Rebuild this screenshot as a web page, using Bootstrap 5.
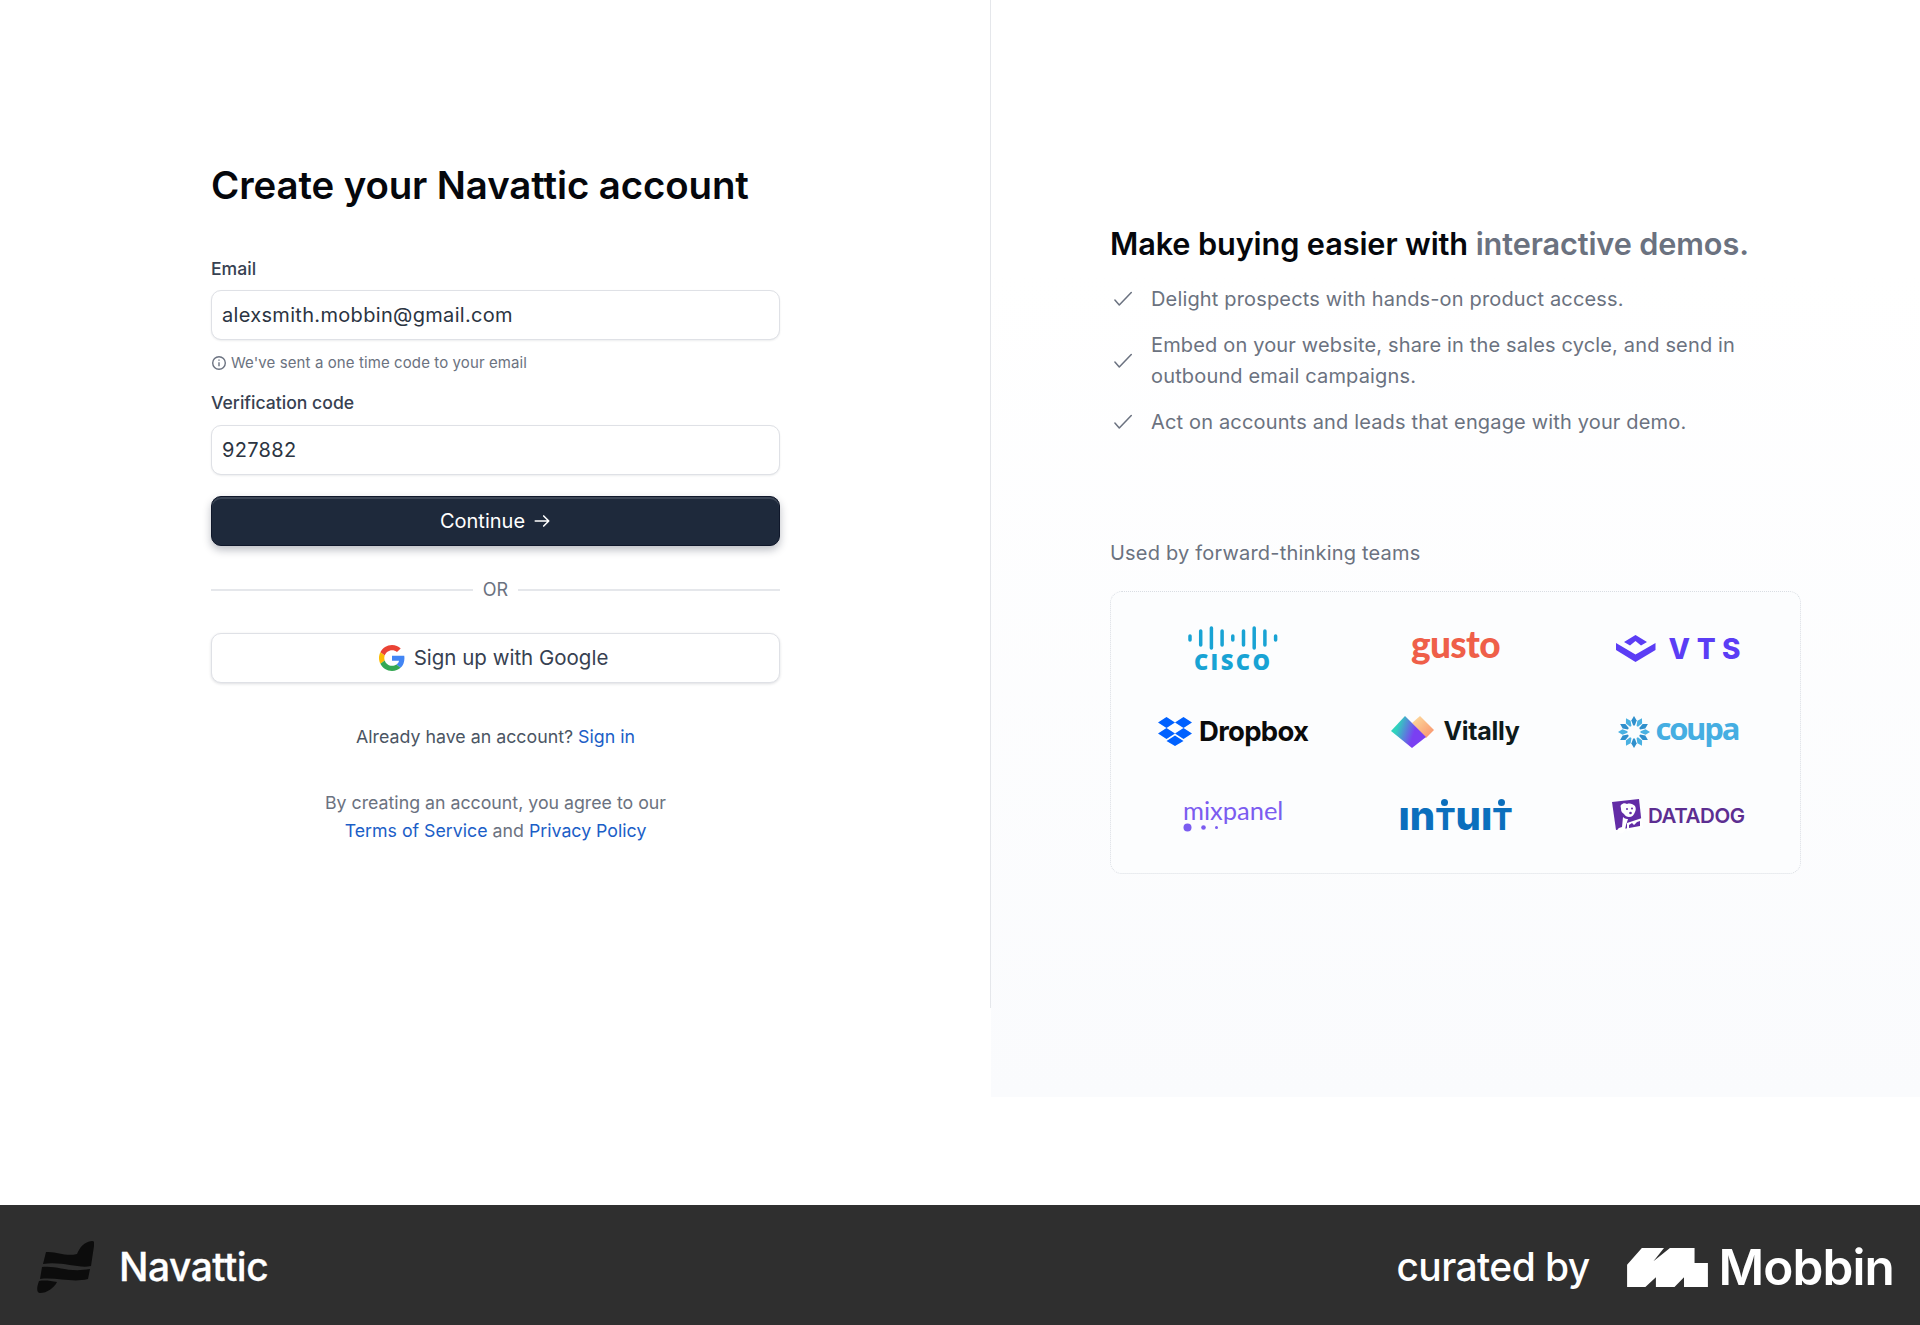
<!DOCTYPE html>
<html lang="en">
<head>
<meta charset="utf-8">
<title>Create your Navattic account</title>
<link href="https://cdn.jsdelivr.net/npm/bootstrap@5.3.0/dist/css/bootstrap.min.css" rel="stylesheet">
<style>
html,body{height:100%}
body{font-family:Inter,"Liberation Sans",sans-serif;color:#374151;background:#fff;overflow:hidden}
.page-wrap{height:1325px}
.main-area{height:1205px}
.left-side{width:991px;height:1008px;border-right:1px solid #e5e7eb;padding:163px 0 0 211px}
.form-box{width:569px}
.page-title{font-size:38.4px;line-height:44px;font-weight:600;color:#05070c;margin:0 0 48px;letter-spacing:-.1px;white-space:nowrap}
.fld-label{font-size:17.6px;line-height:27px;font-weight:500;color:#374151;margin:0 0 8px;display:block}
.fld-input.form-control{height:50px;font-size:20px;color:#2b3442;padding:0 10px;letter-spacing:.32px;border:1px solid #dfe1e6;border-radius:10px;box-shadow:0 1px 2px rgba(16,24,40,.08)}
#vc{margin-top:9px}
.hint-row{font-size:15px;line-height:22px;color:#6b7280;margin:12px 0 15px;letter-spacing:.1px}
.btn-dark-main.btn{height:50px;width:100%;margin-top:21px;background:#1e293b;color:#fff;font-size:20px;font-weight:400;border:1px solid #0f172a;border-radius:10px;box-shadow:inset 0 2px 0 #3c4656,0 4px 8px rgba(15,23,42,.28);padding:0}
.or-row{font-size:18px;color:#6b7280;line-height:27px;margin:30px 0 30px;gap:6px}
.or-line{flex:1;height:2px;background:#e5e7eb}
.btn-google.btn{height:50px;width:100%;background:#fff;color:#374151;font-size:20.5px;font-weight:400;border:1px solid #dfe1e6;border-radius:10px;box-shadow:0 1px 3px rgba(16,24,40,.14);padding:0 4px 0 0;gap:9px}
.foot-note{font-size:17.8px;line-height:27px;text-align:center;margin:40px 0 0;color:#4b5563}
.legal-note{font-size:17.75px;line-height:28px;text-align:center;margin:39px 0 0;color:#6b7280}
.blue-link{color:#1b5ec7;text-decoration:none}
.right-side{flex:1;height:1097px;background:linear-gradient(#fff 0,#fff 25%,#fafbfd 100%);padding:225px 119px 0 119px}
.pitch-title{font-size:30.7px;line-height:38px;font-weight:600;color:#05070c;margin:0 0 21px;white-space:nowrap;letter-spacing:-.12px}
.pitch-title span{color:#6b7280}
.pitch-list{list-style:none;margin:0;padding:0;font-size:20px;line-height:30.5px;color:#6b7280;letter-spacing:.16px}
.pitch-list li{display:flex;align-items:center;gap:17px;margin-bottom:15.5px;max-width:650px}
.pitch-list svg{flex:none;width:24px;height:24px}
.used-by{font-size:20px;line-height:30px;color:#6b7280;margin:101px 0 23px;letter-spacing:.2px}
.logo-card{width:691px;height:283px;padding:15px 11px;border:1px dotted #d9dde3;border-radius:12px;background:#fcfdfe}
.logo-cell{height:83px;display:flex;align-items:center;justify-content:center}
.logo-txt{white-space:nowrap;line-height:1}
.cisco-mark{display:flex;flex-direction:column;align-items:center}
.cisco-txt{font-family:"Open Sans",sans-serif;font-weight:800;font-size:22px;letter-spacing:2.4px;color:#18a3d4;margin-top:2px;line-height:19px}
.gusto-txt{font-family:Lato,sans-serif;font-weight:900;font-size:37px;color:#ef5f49;letter-spacing:-.6px;margin-top:-11px}
.vts-txt{font-weight:800;font-size:28px;color:#5b3df5;letter-spacing:6.5px;margin-left:13px;margin-right:-7px}
.drop-txt{font-weight:700;font-size:27.5px;color:#0b0b0b;letter-spacing:-.7px;margin-left:7px}
.vital-txt{font-weight:700;font-size:25px;color:#0e1a1a;letter-spacing:-.3px;margin-left:9px}
.coupa-txt{font-family:"Open Sans",sans-serif;font-weight:700;font-size:31px;color:#45aee2;letter-spacing:-2.2px;margin-left:4px;margin-top:-7px}
.mix-txt{font-family:Lato,sans-serif;font-weight:400;font-size:25.5px;color:#7b5cf0;line-height:24px}
.mix-dots{display:block;margin-top:1px}
.intuit-txt{font-weight:800;font-size:40px;color:#0b6fbd;letter-spacing:0;margin-top:2px}
.intuit-txt b{font-weight:800;font-size:30px;position:relative;display:inline-block}
.intuit-txt b::after{content:"";position:absolute;left:50%;top:-5px;width:7px;height:7px;margin-left:-4px;border-radius:50%;background:#0b6fbd}
.dog-cell{padding-top:4px}
.dog-txt{font-weight:600;font-size:20.5px;color:#5c2e91;letter-spacing:-.4px;margin-left:5px}
.bottom-bar{height:120px;background:#2f2f2f;padding:4px 26px 0 37px}
.nav-name{font-size:39px;font-weight:500;color:#fff;letter-spacing:-.5px;margin-left:25px;-webkit-text-stroke:.3px #fff}
.curated{font-size:39px;font-weight:500;color:#fff;letter-spacing:-.6px;margin-right:37px}
.mob-name{font-size:49.5px;font-weight:600;color:#fff;letter-spacing:-.9px;margin-left:11px}
</style>
</head>
<body>
<div class="page-wrap d-flex flex-column">
  <div class="main-area d-flex align-items-start">
    <div class="left-side">
      <div class="form-box">
        <h1 class="page-title">Create your Navattic account</h1>
        <form>
          <label class="fld-label" for="em">Email</label>
          <input class="form-control fld-input" id="em" type="text" value="alexsmith.mobbin@gmail.com">
          <div class="hint-row d-flex align-items-center gap-1">
            <svg width="16" height="16" viewBox="0 0 16 16" fill="none" stroke="#6b7280" stroke-width="1.4"><circle cx="8" cy="8" r="6.3"/><path d="M8 7.300v4M8 4.600v1.200"/></svg>
            <span>We've sent a one time code to your email</span>
          </div>
          <label class="fld-label mb-0" for="vc">Verification code</label>
          <input class="form-control fld-input" id="vc" type="text" value="927882">
          <button type="button" class="btn btn-dark-main d-flex align-items-center justify-content-center gap-2">Continue
            <svg width="18" height="18" viewBox="0 0 16 16" fill="none" stroke="#fff" stroke-width="1.4" stroke-linecap="round" stroke-linejoin="round"><path d="M2 8h12M9.500 3.500 14 8l-4.500 4.500"/></svg>
          </button>
          <div class="or-row d-flex align-items-center"><span class="or-line"></span><span class="px-1">OR</span><span class="or-line"></span></div>
          <button type="button" class="btn btn-google d-flex align-items-center justify-content-center">
            <svg width="26" height="26" viewBox="0 0 48 48"><path fill="#EA4335" d="M24 9.500c3.540 0 6.710 1.220 9.210 3.600l6.850-6.850C35.900 2.380 30.470 0 24 0 14.620 0 6.510 5.380 2.560 13.220l7.980 6.190C12.430 13.720 17.740 9.500 24 9.500z"/><path fill="#4285F4" d="M46.980 24.550c0-1.570-.15-3.090-.38-4.550H24v9.020h12.940c-.58 2.960-2.260 5.480-4.780 7.180l7.730 6c4.510-4.180 7.090-10.360 7.090-17.650z"/><path fill="#FBBC05" d="M10.530 28.590c-.48-1.450-.76-2.990-.76-4.590s.27-3.140.76-4.590l-7.980-6.190C.92 16.460 0 20.120 0 24c0 3.880.92 7.540 2.560 10.780l7.970-6.190z"/><path fill="#34A853" d="M24 48c6.480 0 11.930-2.130 15.890-5.810l-7.730-6c-2.150 1.450-4.920 2.300-8.160 2.300-6.260 0-11.570-4.220-13.470-9.910l-7.980 6.190C6.510 42.620 14.620 48 24 48z"/></svg>
            Sign up with Google
          </button>
        </form>
        <p class="foot-note">Already have an account? <a class="blue-link" href="#">Sign in</a></p>
        <p class="legal-note">By creating an account, you agree to our<br><a class="blue-link" href="#">Terms of Service</a> and <a class="blue-link" href="#">Privacy Policy</a></p>
      </div>
    </div>
    <div class="right-side">
      <h2 class="pitch-title">Make buying easier with <span>interactive demos.</span></h2>
      <ul class="pitch-list">
        <li><svg viewBox="0 0 22 22" fill="none" stroke="#6b7280" stroke-width="1.4" stroke-linecap="round" stroke-linejoin="round"><path d="M4.500 12l4 4.500L19.500 5"/></svg><span>Delight prospects with hands-on product access.</span></li>
        <li><svg viewBox="0 0 22 22" fill="none" stroke="#6b7280" stroke-width="1.4" stroke-linecap="round" stroke-linejoin="round"><path d="M4.500 12l4 4.500L19.500 5"/></svg><span>Embed on your website, share in the sales cycle, and send in outbound email campaigns.</span></li>
        <li><svg viewBox="0 0 22 22" fill="none" stroke="#6b7280" stroke-width="1.4" stroke-linecap="round" stroke-linejoin="round"><path d="M4.500 12l4 4.500L19.500 5"/></svg><span>Act on accounts and leads that engage with your demo.</span></li>
      </ul>
      <p class="used-by">Used by forward-thinking teams</p>
      <div class="logo-card">
        <div class="row g-0">
          <div class="col-4 logo-cell">
            <div class="cisco-mark">
              <svg width="90" height="24" viewBox="0 0 90 24" stroke="#18a3d4" stroke-width="3.500" stroke-linecap="round"><path d="M2 10v4M12.700 5v14M23.400 2v20M34.100 5v14M44.800 10v4M55.500 5v14M66.200 2v20M76.900 5v14M87.600 10v4"/></svg>
              <span class="cisco-txt">CISCO</span>
            </div>
          </div>
          <div class="col-4 logo-cell"><span class="logo-txt gusto-txt">gusto</span></div>
          <div class="col-4 logo-cell">
            <svg width="40" height="27" viewBox="0 0 40 27" fill="#5b3df5"><path d="M19.500 0L31 7l-6 3.500L19.500 6 14 10.500 8 7z"/><path d="M0 8l19.500 11.500L39.500 8v7L19.500 27 0 15z"/></svg>
            <span class="logo-txt vts-txt">VTS</span>
          </div>
          <div class="col-4 logo-cell">
            <svg width="34" height="29" viewBox="0 0 34 29" fill="#0061ff"><path d="M8.500 0L17 5.500 8.500 11 0 5.500zM25.500 0L34 5.500 25.500 11 17 5.500zM0 16.500L8.500 11 17 16.500 8.500 22zM25.500 11L34 16.500 25.500 22 17 16.500zM8.500 24L17 18.500 25.500 24 17 29z"/></svg>
            <span class="logo-txt drop-txt">Dropbox</span>
          </div>
          <div class="col-4 logo-cell">
            <svg width="43" height="33" viewBox="0 0 43 33"><defs><linearGradient id="vg" x1="0" y1="0" x2="1" y2="0.300"><stop offset=".25" stop-color="#2fd3bd"/><stop offset=".75" stop-color="#7a3ff2"/></linearGradient><linearGradient id="vp" x1="0" y1="0" x2="1" y2="1"><stop offset="0" stop-color="#fde0a0"/><stop offset="1" stop-color="#f98f6a"/></linearGradient></defs><path fill="url(#vp)" d="M29 1l14 14-8 8-14-15z"/><path fill="url(#vg)" d="M0 16L14 1l21 21-14 11z"/></svg>
            <span class="logo-txt vital-txt">Vitally</span>
          </div>
          <div class="col-4 logo-cell">
            <svg width="34" height="32" viewBox="-17 -16 34 32"><defs><path id="cp" d="M0-16L2.700-11.500 .8-6.500H-.8L-2.700-11.500z"/></defs><g fill="#2f8fcc"><use href="#cp"/><use href="#cp" transform="rotate(60)"/><use href="#cp" transform="rotate(120)"/><use href="#cp" transform="rotate(180)"/><use href="#cp" transform="rotate(240)"/><use href="#cp" transform="rotate(300)"/></g><g fill="#49b1e2"><use href="#cp" transform="rotate(30)"/><use href="#cp" transform="rotate(90)"/><use href="#cp" transform="rotate(150)"/><use href="#cp" transform="rotate(210)"/><use href="#cp" transform="rotate(270)"/><use href="#cp" transform="rotate(330)"/></g></svg>
            <span class="logo-txt coupa-txt">coupa</span>
          </div>
          <div class="col-4 logo-cell">
            <div>
              <span class="logo-txt mix-txt d-block">mixpanel</span>
              <svg class="mix-dots" width="40" height="9" viewBox="0 0 40 9" fill="#7b5cf0"><circle cx="4.500" cy="4.500" r="4"/><circle cx="20.500" cy="4.500" r="2.300"/><circle cx="33.500" cy="4.500" r="1.500"/></svg>
            </div>
          </div>
          <div class="col-4 logo-cell"><span class="logo-txt intuit-txt">ın<b>T</b>uı<b>T</b></span></div>
          <div class="col-4 logo-cell dog-cell">
            <svg width="32" height="35" viewBox="0 0 32 35"><path fill="#632ca6" d="M1 3L28 0l3 27-26 4z"/><path fill="#fff" d="M10 6c2-2 4-2 6-1 3-1 6 0 8 2 1 2 1 4 0 6-1 3-3 5-6 5-2 0-4-1-5-3-2-1-3-3-3-5 0-2-1-3 0-4z"/><path fill="#fff" d="M12 18c2 2 4 2 5 2l-2 6-1 5c-1 3-4 4-6 3-2-1-2-4 0-5l3-1z"/><path fill="#fff" d="M16 24l15-5 1 10-16 3z"/><path fill="#632ca6" d="M18 26l3-2 2 2 3-3 3-1 0 5-11 2z"/><circle cx="16" cy="10" r="1" fill="#632ca6"/><circle cx="21" cy="9.500" r="1" fill="#632ca6"/><circle cx="19.500" cy="14" r="1.300" fill="#632ca6"/></svg>
            <span class="logo-txt dog-txt">DATADOG</span>
          </div>
        </div>
      </div>
    </div>
  </div>
  <footer class="bottom-bar d-flex align-items-center justify-content-between">
    <div class="d-flex align-items-center">
      <svg width="57" height="52" viewBox="0 0 57 52" fill="#0c0c0c"><path d="M9 11C20 10 28 16 40 13 43 6 47 1 55 0 58 0 58 3 57 5L54 25C42 28 25 20 6 23z"/><path d="M5 26C20 24 30 32 53 28L51 38C35 42 20 36 3 38z"/><path d="M2 40C8 39 14 40 20 41 17 47 10 52 3 52 0 52-1 48 2 40z"/></svg>
      <span class="nav-name">Navattic</span>
    </div>
    <div class="d-flex align-items-center">
      <span class="curated">curated by</span>
      <svg width="81" height="39" viewBox="0 0 230 111" fill="#fff"><path d="M0 48L42 0H105L75 38 122 0H192V43H230V111H162V83L135 111H82V83L52 111H0z"/></svg>
      <span class="mob-name">Mobbin</span>
    </div>
  </footer>
</div>
<script src="https://cdn.jsdelivr.net/npm/bootstrap@5.3.0/dist/js/bootstrap.bundle.min.js"></script>
</body>
</html>
